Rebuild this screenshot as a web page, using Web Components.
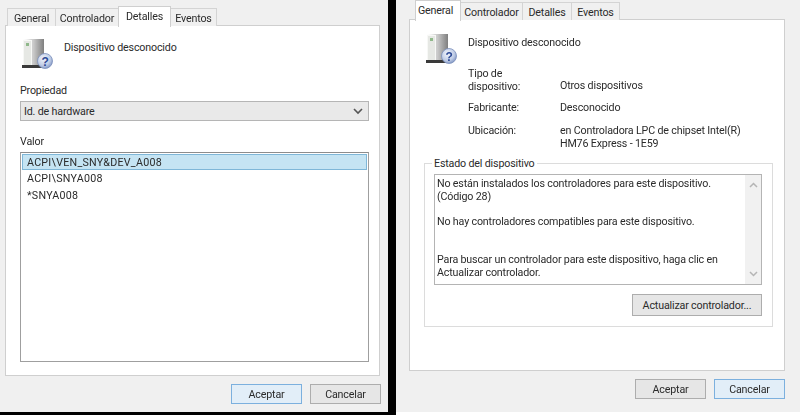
<!DOCTYPE html>
<html lang="es">
<head>
<meta charset="utf-8">
<title>Dispositivo desconocido</title>
<style>
  html, body { margin: 0; padding: 0; background: #000; }
  body { width: 800px; height: 415px; overflow: hidden; font: 10.7px/13px Roboto, "Liberation Sans", sans-serif; letter-spacing: -.17px; color: #2b2b2b; }
  .screen { display: grid; grid-template-columns: 388px 404px; column-gap: 8px; width: 800px; height: 415px; filter: blur(.45px); }
  .h-first { height: 412px; }
</style>
</head>
<body>
<div class="screen">
  <prop-dialog class="h-first" active="Detalles" tab-widths="49,64,53,47" style="--pad-top:6px;--pad-left:5px;--pad-right:8px;--panel-h:351px;--foot-gap:8px;--foot-right:7px;--tab-left:3px">
    <device-head style="--top:12px;--left:15px"></device-head>
    <field-label style="--top:14px;--left:14px">Propiedad</field-label>
    <prop-combo>Id. de hardware</prop-combo>
    <field-label style="--top:14px;--left:14px">Valor</field-label>
    <value-list>
      <value-row selected>ACPI\VEN_SNY&amp;DEV_A008</value-row>
      <value-row>ACPI\SNYA008</value-row>
      <value-row>*SNYA008</value-row>
    </value-list>
  </prop-dialog>

  <prop-dialog active="General" focus="Cancelar" tab-widths="46,63,50,49" style="--pad-top:0px;--pad-left:13px;--pad-right:15px;--panel-h:352px;--foot-gap:8px;--foot-right:15px;--strip:3px;--tab-left:7px;--tab-end:5px">
    <device-head style="--top:13px;--left:15px"></device-head>
    <info-table>
      <info-row label="Tipo de&#10;dispositivo:">Otros dispositivos</info-row>
      <info-row label="Fabricante:">Desconocido</info-row>
      <info-row label="Ubicación:">en Controladora LPC de chipset Intel(R)<br>HM76 Express - 1E59</info-row>
    </info-table>
    <status-box legend="Estado del dispositivo" action="Actualizar controlador...">No están instalados los controladores para este dispositivo.
(Código 28)

No hay controladores compatibles para este dispositivo.


Para buscar un controlador para este dispositivo, haga clic en
Actualizar controlador.</status-box>
  </prop-dialog>
</div>

<script>
// small helper so each element just declares its html
class Base extends HTMLElement {
  constructor() {
    super();
    this.attachShadow({ mode: "open" });
  }
  connectedCallback() {
    this.shadowRoot.innerHTML = this.render();
  }
}

class PropDialog extends Base {
  render() {
    const active = this.getAttribute("active");
    const focus = this.getAttribute("focus") || "Aceptar";
    const widths = this.getAttribute("tab-widths").split(",");
    const tabs = ["General", "Controlador", "Detalles", "Eventos"].map((t, i) =>
      `<dlg-tab style="width:${widths[i]}px" ${t === active ? "active" : ""}>${t}</dlg-tab>`).join("");
    return `
      <style>
        :host { display: flex; flex-direction: column; background: #f0f0f0; box-sizing: border-box; padding-top: var(--pad-top); height: 415px; }
        :host(.h-first) { height: 412px; }
        .tabs { display: flex; align-items: flex-end; margin: 0 0 0 calc(var(--pad-left) + var(--tab-left, 2px)); position: relative; z-index: 1; }
        .panel { background: #fff; border: 1px solid #cfcfcf; box-sizing: border-box; height: var(--panel-h); margin: -1px var(--pad-right) 0 var(--pad-left); display: flex; flex-direction: column; }
        .foot { display: flex; justify-content: flex-end; gap: var(--foot-gap); margin: 8px var(--foot-right) 0 0; }
        .strip { margin-top: auto; height: var(--strip, 0); background: #fff; }
      </style>
      <div class="tabs">${tabs}</div>
      <div class="panel"><slot></slot></div>
      <div class="foot">
        <dlg-button ${focus === "Aceptar" ? "focused" : ""}>Aceptar</dlg-button>
        <dlg-button ${focus === "Cancelar" ? "focused" : ""}>Cancelar</dlg-button>
      </div>
      <div class="strip"></div>`;
  }
}

class DlgTab extends Base {
  render() {
    return `
      <style>
        :host { display: block; box-sizing: border-box; height: 18px; padding-top: 3px; text-align: center; background: #f0f0f0; border: 1px solid #d4d4d4; border-bottom: 0; margin-left: -1px; white-space: nowrap; }
        :host([active]) { height: 21px; background: #fff; padding-right: var(--tab-end, 0); border-color: #cfcfcf; position: relative; z-index: 2; margin-bottom: -1px; }
      </style><slot></slot>`;
  }
}

class DeviceHead extends Base {
  render() {
    return `
      <style>
        :host { display: flex; align-items: flex-start; gap: 12px; margin: var(--top) 0 0 var(--left); height: 32px; }
        span { padding-top: 3px; margin-left: -1px; }
      </style>
      <device-icon></device-icon><span>Dispositivo desconocido</span>`;
  }
}

class DeviceIcon extends Base {
  render() {
    return `
      <style>:host { display: block; width: 32px; height: 32px; } svg { display: block; }</style>
      <svg width="32" height="32" viewBox="0 0 32 32">
        <defs>
          <linearGradient id="side" x1="0" x2="1" y1="0" y2="0">
            <stop offset="0" stop-color="#f4f4f4"/><stop offset=".5" stop-color="#c9c9c9"/><stop offset="1" stop-color="#7f7f7f"/>
          </linearGradient>
          <radialGradient id="ball" cx=".4" cy=".35" r=".75">
            <stop offset="0" stop-color="#f2f5fb"/><stop offset=".6" stop-color="#bfcce6"/><stop offset="1" stop-color="#6f86b8"/>
          </radialGradient>
        </defs>
        <path d="M2 2 L10 1 H23 V27 H2 Z" fill="url(#side)"/>
        <rect x="2" y="2" width="9" height="25" fill="#f7f8f6"/>
        <rect x="3" y="3" width="7" height="24" fill="#e6e8e4"/>
        <rect x="5" y="5" width="3" height="3" fill="#8fb88a"/>
        <path d="M1 27 H24 V30 H1 Z" fill="#3a3a3a"/>
        <circle cx="24" cy="23" r="7.5" fill="url(#ball)" stroke="#7b8fbb" stroke-width=".8"/>
        <text x="24" y="27.5" text-anchor="middle" font-family="Liberation Sans, sans-serif" font-weight="700" font-size="12" fill="#2c4a96">?</text>
      </svg>`;
  }
}

class FieldLabel extends Base {
  render() {
    return `
      <style>:host { display: block; margin: var(--top) 0 0 var(--left); height: 13px; }</style><slot></slot>`;
  }
}

class PropCombo extends Base {
  render() {
    return `
      <style>
        :host { display: flex; align-items: center; justify-content: space-between; box-sizing: border-box; height: 20px; margin: 4px 10px 0 14px; padding: 0 5px 0 3px; background: #e9e9e9; border: 1px solid #b5b5b5; }
        svg { display: block; }
      </style>
      <slot></slot>
      <svg width="10" height="7" viewBox="0 0 10 7"><path d="M1 1 L5 5 L9 1" fill="none" stroke="#555" stroke-width="1.6"/></svg>`;
  }
}

class ValueList extends Base {
  render() {
    return `
      <style>
        :host { display: block; box-sizing: border-box; height: 210px; margin: 4px 10px 0 14px; padding: 1px; background: #fff; border: 1px solid #9f9f9f; border-top-color: #8d8d8d; letter-spacing: .25px; }
      </style><slot></slot>`;
  }
}

class ValueRow extends Base {
  render() {
    return `
      <style>
        :host { display: block; box-sizing: border-box; height: 16.3px; padding: 1px 4px 0; border: 1px solid transparent; line-height: 14px; }
        :host([selected]) { background: #c5e4f3; border-color: #7fb7d8; }
      </style><slot></slot>`;
  }
}

class InfoTable extends Base {
  render() {
    return `
      <style>:host { display: flex; flex-direction: column; gap: 10px; margin: 2px 0 0 58px; }</style><slot></slot>`;
  }
}

class InfoRow extends Base {
  render() {
    return `
      <style>
        :host { display: grid; grid-template-columns: 92px 1fr; align-items: end; }
        :host(:first-child) { margin-bottom: -2px; }
        :host(:first-child) .val { padding-bottom: 1px; }
        :host(:last-child) { align-items: start; }
        .label { white-space: pre-line; }
        .label, .val { line-height: 13px; }
      </style>
      <div class="label">${this.getAttribute("label")}</div>
      <div class="val"><slot></slot></div>`;
  }
}

class StatusBox extends Base {
  render() {
    return `
      <style>
        :host { display: block; position: relative; box-sizing: border-box; height: 164px; margin: 13px 11px 0 14px; padding: 10px 10px 0 9px; border: 1px solid #dcdcdc; }
        .legend { position: absolute; top: -7px; left: 7px; padding: 0 2px; background: #fff; line-height: 13px; }
        .text { display: flex; box-sizing: border-box; height: 111px; border: 1px solid #b4b4b4; padding: 3px 0 0 2px; line-height: 12.7px; white-space: pre-line; }
        .msg { flex: 1; }
        .bar { width: 16px; margin-top: -3px; background: #f1f1f1; display: flex; flex-direction: column; justify-content: space-between; align-items: center; padding: 7px 0; }
        .row { display: flex; justify-content: flex-end; margin-top: 9px; }
        svg { display: block; }
      </style>
      <div class="legend">${this.getAttribute("legend")}</div>
      <div class="text">
        <div class="msg"><slot></slot></div>
        <div class="bar">
          <svg width="9" height="6" viewBox="0 0 9 6"><path d="M1 5 L4.5 1.5 L8 5" fill="none" stroke="#b5b5b5" stroke-width="1.5"/></svg>
          <svg width="9" height="6" viewBox="0 0 9 6"><path d="M1 1 L4.5 4.5 L8 1" fill="none" stroke="#b5b5b5" stroke-width="1.5"/></svg>
        </div>
      </div>
      <div class="row"><dlg-button wide>${this.getAttribute("action")}</dlg-button></div>`;
  }
}

class DlgButton extends Base {
  render() {
    return `
      <style>
        :host { display: flex; align-items: center; justify-content: center; box-sizing: border-box; width: 71px; height: 20px; background: #e6e6e6; border: 1px solid #adadad; }
        :host([wide]) { width: 130px; height: 22px; }
        :host([focused]) { background: #e2eef8; border-color: #7cb0de; }
      </style><slot></slot>`;
  }
}

customElements.define("prop-dialog", PropDialog);
customElements.define("dlg-tab", DlgTab);
customElements.define("device-head", DeviceHead);
customElements.define("device-icon", DeviceIcon);
customElements.define("field-label", FieldLabel);
customElements.define("prop-combo", PropCombo);
customElements.define("value-list", ValueList);
customElements.define("value-row", ValueRow);
customElements.define("info-table", InfoTable);
customElements.define("info-row", InfoRow);
customElements.define("status-box", StatusBox);
customElements.define("dlg-button", DlgButton);
</script>
</body>
</html>
